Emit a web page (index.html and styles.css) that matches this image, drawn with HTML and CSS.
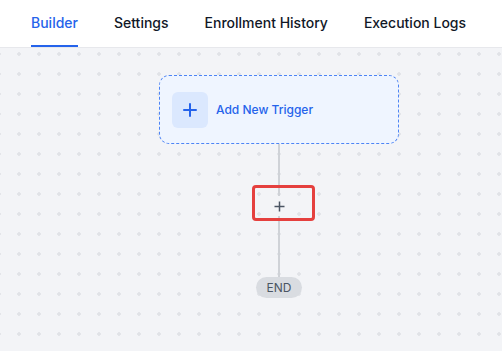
FILE: index.html
```html
<!DOCTYPE html>
<html lang="en">
  <head>
    <meta charset="UTF-8" />
    <meta name="viewport" content="width=device-width, initial-scale=1.0" />
    <title>Workflow Builder</title>
    <link rel="stylesheet" href="styles.css">
  </head>
  <body>
    <nav class="tabs">
      <a class="tab active">Builder</a>
      <a class="tab">Settings</a>
      <a class="tab">Enrollment History</a>
      <a class="tab">Execution Logs</a>
    </nav>

    <main class="canvas">
      <div class="flow">
        <div class="trigger">
          <span class="trigger-icon">
            <svg width="14" height="14" viewBox="0 0 14 14">
              <path d="M7 1v12M1 7h12" stroke="#2563eb" stroke-width="2" stroke-linecap="round" />
            </svg>
          </span>
          <span class="trigger-label">Add New Trigger</span>
        </div>

        <div class="line top"></div>

        <!-- add step button (highlighted) -->
        <button class="add-step">
          <svg width="11" height="11" viewBox="0 0 11 11">
            <path d="M5.5 0.5v10M0.5 5.5h10" stroke="#4b5563" stroke-width="1.5" />
          </svg>
        </button>

        <div class="line bottom"></div>

        <div class="end">END</div>
      </div>
    </main>
  </body>
</html>
```

FILE: styles.css
```css
body {
  margin: 0;
  font-family: Inter, "Noto Sans", sans-serif;
  background: #f3f4f7;
  overflow: hidden;
}
.tabs {
  display: flex;
  gap: 36px;
  padding-left: 31px;
  background: white;
  border-bottom: 1px solid #e7e8ec;
}
.tab {
  padding: 13px 0 12px;
  font-size: 14px;
  line-height: 20px;
  font-weight: 500;
  color: #111827;
  border-bottom: 2px solid transparent;
}
.tab.active {
  color: #2563eb;
  border-bottom-color: #2563eb;
}
.canvas {
  height: 303px;
  padding-top: 27px;
  box-sizing: border-box;
  background-color: #f3f4f7;
  background-image: radial-gradient(circle, #e1e3e7 1.5px, transparent 2px);
  background-size: 20px 20px;
  background-position: 9px 16px;
}
.flow {
  width: 240px;
  margin-left: 159px;
  display: flex;
  flex-direction: column;
  align-items: center;
}
.trigger {
  width: 100%;
  height: 69px;
  box-sizing: border-box;
  display: flex;
  align-items: center;
  gap: 8px;
  padding: 0 12px;
  background: #eff5ff;
  border: 1px dashed #4d84f5;
  border-radius: 10px;
}
.trigger-icon {
  width: 36px;
  height: 36px;
  display: flex;
  align-items: center;
  justify-content: center;
  background: #dbe8fe;
  border-radius: 6px;
}
.trigger-label {
  font-size: 12px;
  font-weight: 500;
  color: #2563eb;
}
.line {
  width: 2px;
  background: #cfd2d7;
}
.line.top {
  height: 52px;
}
.line.bottom {
  height: 61px;
}
.add-step {
  position: relative;
  width: 24px;
  height: 20px;
  padding: 0;
  border: none;
  background: #f3f4f7;
  display: flex;
  align-items: center;
  justify-content: center;
}
.add-step::after {
  content: "";
  position: absolute;
  top: -11px;
  left: -15px;
  width: 63px;
  height: 36px;
  box-sizing: border-box;
  border: 3px solid #e5403e;
  border-radius: 4px;
}
.end {
  width: 46px;
  height: 21px;
  display: flex;
  align-items: center;
  justify-content: center;
  background: #d9dce1;
  border-radius: 11px;
  font-size: 12px;
  color: #4b5563;
}
```
